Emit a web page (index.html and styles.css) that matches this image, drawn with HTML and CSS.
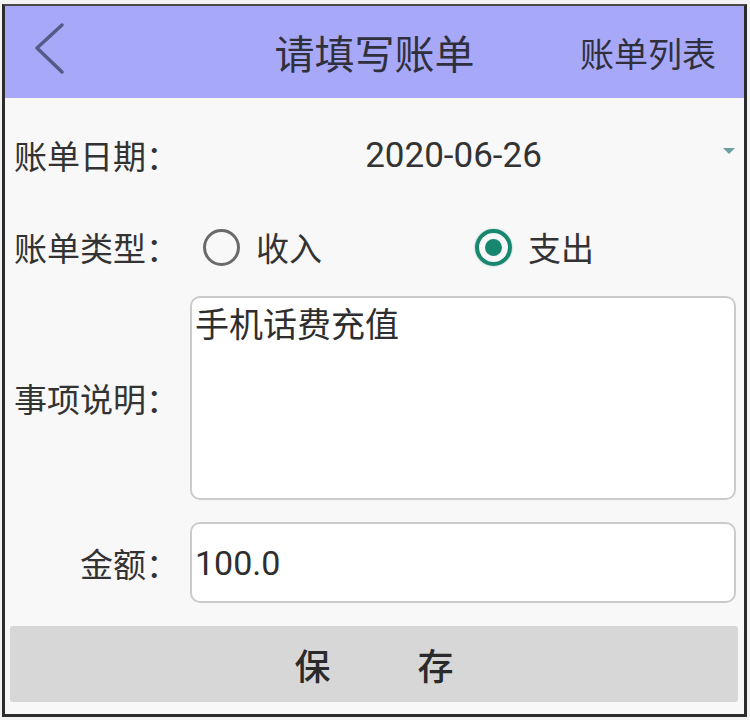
FILE: index.html
```html
<!DOCTYPE html>
<html lang="zh-CN">
<head>
<meta charset="utf-8">
<title>请填写账单</title>
<link rel="stylesheet" href="styles.css">
</head>
<body>
<div class="frame">
  <header class="topbar">
    <div class="back">
      <svg width="60" height="92" viewBox="0 0 60 92"><polyline points="57,19 32,42 57,66" fill="none" stroke="#555b86" stroke-width="3.5" stroke-linecap="round" stroke-linejoin="round"/></svg>
    </div>
    <h1 class="title">请填写账单</h1>
    <div class="link">账单列表</div>
  </header>
  <main class="form">
    <div class="row row-date">
      <label class="label">账单日期：</label>
      <div class="spinner">
        <span></span>
        <span class="date">2020-06-26</span>
        <span class="caret"></span>
      </div>
    </div>
    <div class="row row-type">
      <label class="label">账单类型：</label>
      <div class="radios">
        <div class="opt"><span class="radio"></span><span class="opt-text">收入</span></div>
        <div class="opt"><span class="radio checked"></span><span class="opt-text">支出</span></div>
      </div>
    </div>
    <div class="row row-memo">
      <label class="label">事项说明：</label>
      <div class="box memo">手机话费充值</div>
    </div>
    <div class="row row-amount">
      <label class="label">金额：</label>
      <div class="box amount">100.0</div>
    </div>
    <button class="save"><span>保</span><span>存</span></button>
  </main>
</div>
</body>
</html>
```

FILE: styles.css
```css
html, body {
  margin: 0;
  padding: 0;
  background: #f3f3f3;
}
body {
  font-family: Roboto, "Noto Sans CJK SC", sans-serif;
  color: #333;
}
.frame {
  box-sizing: border-box;
  width: 745px;
  height: 713px;
  margin: 4px 0 0 2px;
  border: 3px solid #2c2c2c;
  border-top: 2px solid #4a4a4a;
  background: #f8f8f8;
  display: flex;
  flex-direction: column;
}
.topbar {
  height: 92px;
  background: #a8a8f9;
  display: grid;
  grid-template-columns: 1fr auto 1fr;
  align-items: center;
}
.back {
  display: flex;
  height: 92px;
}
.title {
  margin: 0;
  font-size: 40px;
  font-weight: 400;
  color: #30303c;
}
.link {
  justify-self: end;
  padding-right: 28px;
  font-size: 34px;
  color: #30303c;
}
.form {
  flex: 1;
  padding: 0 8px 0 7px;
  display: flex;
  flex-direction: column;
}
.row {
  display: flex;
  align-items: center;
}
.label {
  width: 167px;
  flex: none;
  text-align: right;
  font-size: 33px;
  color: #333;
  white-space: nowrap;
}
.row-date {
  height: 114px;
}
.spinner {
  flex: 1;
  display: grid;
  grid-template-columns: 1fr auto 1fr;
  align-items: center;
}
.date {
  font-size: 35px;
  color: #333;
  margin-left: -8px;
}
.caret {
  justify-self: end;
  width: 0;
  height: 0;
  border-left: 6px solid transparent;
  border-right: 6px solid transparent;
  border-top: 6px solid #6f9fa0;
  margin-top: -8px;
  margin-right: 1px;
}
.row-type {
  height: 70px;
}
.radios {
  display: flex;
  margin-left: 24px;
}
.opt {
  width: 272px;
  display: flex;
  align-items: center;
}
.radio {
  box-sizing: border-box;
  width: 37px;
  height: 37px;
  border-radius: 50%;
  border: 3px solid #6a6a6a;
  display: flex;
  align-items: center;
  justify-content: center;
}
.radio.checked {
  border: 4px solid #17876f;
  box-shadow: 0 0 2px rgba(23, 135, 111, 0.5);
}
.radio.checked::after {
  content: "";
  width: 17px;
  height: 17px;
  border-radius: 50%;
  background: #17876f;
}
.opt-text {
  margin-left: 16px;
  font-size: 33px;
}
.box {
  flex: 1;
  box-sizing: border-box;
  margin-left: 11px;
  background: #fff;
  border: 2px solid #cbcbcb;
  border-radius: 10px;
  font-size: 34px;
  color: #2e2e2e;
}
.row-memo {
  margin-top: 14px;
  height: 204px;
}
.memo {
  height: 204px;
  padding: 6px 3px;
  line-height: 42px;
}
.row-amount {
  margin-top: 22px;
  height: 81px;
}
.amount {
  height: 81px;
  padding: 0 3px;
  display: flex;
  align-items: center;
}
.save {
  margin: 23px -2px 0 -2px;
  height: 76px;
  border: none;
  border-radius: 3px;
  background: #d7d7d7;
  display: flex;
  align-items: center;
  justify-content: center;
  gap: 87px;
  font-family: "Noto Sans CJK SC", sans-serif;
  font-size: 36px;
  font-weight: 500;
  color: #2a2a2a;
  padding: 0;
}
```
